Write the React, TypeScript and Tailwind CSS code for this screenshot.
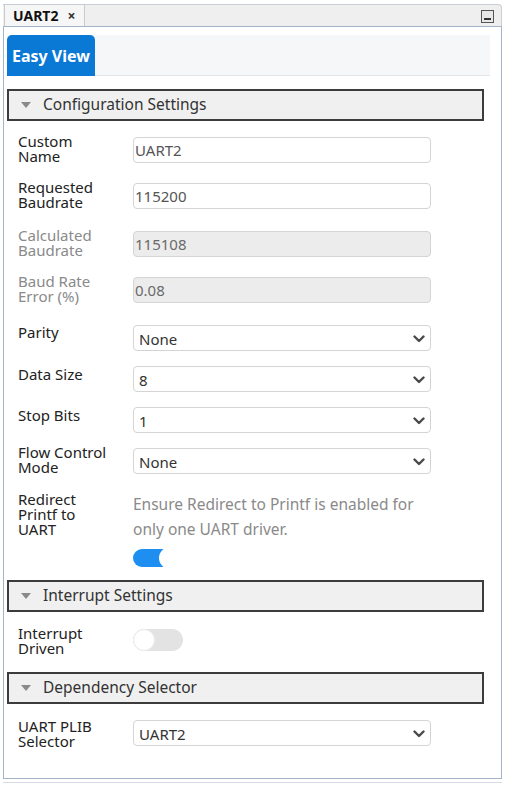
import React from "react";

const font = { fontFamily: '"Noto Sans", "Open Sans", Arial, sans-serif' };

function Chevron() {
  return (
    <svg width="12" height="8" viewBox="0 0 12 8" className="absolute right-[5px] top-[9px]">
      <polyline points="1.5,1.5 6,6 10.5,1.5" fill="none" stroke="#4a4a4a" strokeWidth="2.4" strokeLinecap="round" strokeLinejoin="round" />
    </svg>
  );
}

function Header({ title, mt }: { title: string; mt: string }) {
  return (
    <div className={`${mt} ml-[3px] w-[477px] h-[32px] border-2 border-[#3c3c3c] bg-[#f0f0f0] flex items-center`}>
      <svg width="10" height="7" viewBox="0 0 10 7" className="ml-[12px]">
        <polygon points="0,0 10,0 5,6" fill="#8a8a8a" />
      </svg>
      <span className="ml-[12px] text-[15.5px] text-[#333] leading-none">{title}</span>
    </div>
  );
}

function Label({ lines, off, gray }: { lines: string[]; off: string; gray?: boolean }) {
  return (
    <div className={`relative ${off} w-[115px] h-[26px] shrink-0 text-[15px] leading-[15px] ${gray ? "text-[#8a8a8a]" : "text-[#222]"}`}>
      {lines.map((l, i) => (
        <div key={i}>{l}</div>
      ))}
    </div>
  );
}

function TextRow({ lines, value, disabled, mt, off }: { lines: string[]; value: string; disabled?: boolean; mt: string; off: string }) {
  return (
    <div className={`flex items-start ${mt}`}>
      <Label lines={lines} off={off} gray={disabled} />
      <div
        className={`w-[298px] h-[26px] rounded-[4px] border border-[#d4d4d4] flex items-center pl-[1px] text-[15px] ${
          disabled ? "bg-[#ececec] text-[#6a6a6a]" : "bg-white text-[#555]"
        }`}
      >
        {value}
      </div>
    </div>
  );
}

function SelectRow({ lines, value, mt, off }: { lines: string[]; value: string; mt: string; off: string }) {
  return (
    <div className={`flex items-start ${mt}`}>
      <Label lines={lines} off={off} />
      <div className="relative w-[298px] h-[26px] rounded-[4px] border border-[#d4d4d4] bg-white flex items-center pl-[5px] pt-[2px] text-[15px] text-[#333]">
        {value}
        <Chevron />
      </div>
    </div>
  );
}

export default function App() {
  return (
    <div className="w-[508px] h-[786px] bg-white relative overflow-hidden" style={font}>
      {/* tab bar */}
      <div className="absolute left-[3px] top-[4px] w-[499px] h-[23px] bg-[#efefef] border-t border-r border-[#c9ced6] rounded-tr-[4px] flex items-stretch">
        <div className="ml-[1px] -mt-px w-[81px] bg-[#f6f6f6] border border-b-0 border-[#c7ccd4] flex items-center">
          <span className="ml-[8px] text-[14px] font-bold text-[#111] leading-none">UART2</span>
          <span className="ml-[9px] text-[14px] font-bold text-[#333] leading-none">×</span>
        </div>
        <div className="flex-1" />
        <div className="mr-[7px] mt-[5px] w-[13px] h-[13px] border-[1.5px] border-[#555] bg-[#e8e8e8] flex items-end justify-center pb-[2px]">
          <div className="w-[7px] h-[2px] bg-[#333]" />
        </div>
      </div>

      {/* panel */}
      <div className="absolute left-[3px] top-[26px] w-[499px] h-[753px] border border-[#a3b3c9] bg-white">
        <div className="mt-[8px] ml-[3px] w-[483px] h-[41px] bg-[#f6f7f9] border-b border-[#e2e5ea] flex">
          <div className="w-[88px] h-[41px] bg-[#0a79d5] rounded-t-[5px] flex items-center justify-center">
            <span className="text-[16px] font-bold text-white leading-none">Easy View</span>
          </div>
        </div>

        <Header title="Configuration Settings" mt="mt-[13px]" />

        <div className="pl-[14px]">
          <TextRow lines={["Custom", "Name"]} value="UART2" mt="mt-[16px]" off="-top-[3px]" />
          <TextRow lines={["Requested", "Baudrate"]} value="115200" mt="mt-[20px]" off="-top-[3px]" />
          <TextRow lines={["Calculated", "Baudrate"]} value="115108" disabled mt="mt-[22px]" off="-top-[3px]" />
          <TextRow lines={["Baud Rate", "Error (%)"]} value="0.08" disabled mt="mt-[20px]" off="-top-[3px]" />
          <SelectRow lines={["Parity"]} value="None" mt="mt-[22px]" off="top-0" />
          <SelectRow lines={["Data Size"]} value="8" mt="mt-[15px]" off="top-[1px]" />
          <SelectRow lines={["Stop Bits"]} value="1" mt="mt-[15px]" off="top-[1px]" />
          <SelectRow lines={["Flow Control", "Mode"]} value="None" mt="mt-[15px]" off="-top-[3px]" />

          <div className="flex items-start mt-[18px]">
            <Label lines={["Redirect", "Printf to", "UART"]} off="top-0" />
            <div>
              <div className="text-[15.5px] leading-[25px] text-[#8a8a8a]">
                <div>Ensure Redirect to Printf is enabled for</div>
                <div>only one UART driver.</div>
              </div>
              <div className="relative mt-[7px] h-[18px] w-[50px] overflow-hidden">
                <div className="absolute left-0 top-0 w-[34px] h-[18px] rounded-l-full bg-[#1f8ef1]" />
                <div className="absolute left-[26px] -top-[2px] w-[22px] h-[22px] rounded-full bg-white" />
              </div>
            </div>
          </div>
        </div>

        <Header title="Interrupt Settings" mt="mt-[13px]" />

        <div className="pl-[14px]">
          <div className="flex items-start mt-[14px]">
            <Label lines={["Interrupt", "Driven"]} off="top-0" />
            <div className="relative mt-[3px] w-[50px] h-[22px] rounded-full bg-[#e3e3e3]">
              <div className="absolute left-0 top-0 w-[22px] h-[22px] rounded-full bg-white border border-[#ececec]" />
            </div>
          </div>
        </div>

        <Header title="Dependency Selector" mt="mt-[20px]" />

        <div className="pl-[14px]">
          <SelectRow lines={["UART PLIB", "Selector"]} value="UART2" mt="mt-[16px]" off="-top-[1px]" />
        </div>
      </div>
      <div className="absolute left-[3px] top-[782px] w-[499px] h-px bg-[#d8dde4]" />
    </div>
  );
}
